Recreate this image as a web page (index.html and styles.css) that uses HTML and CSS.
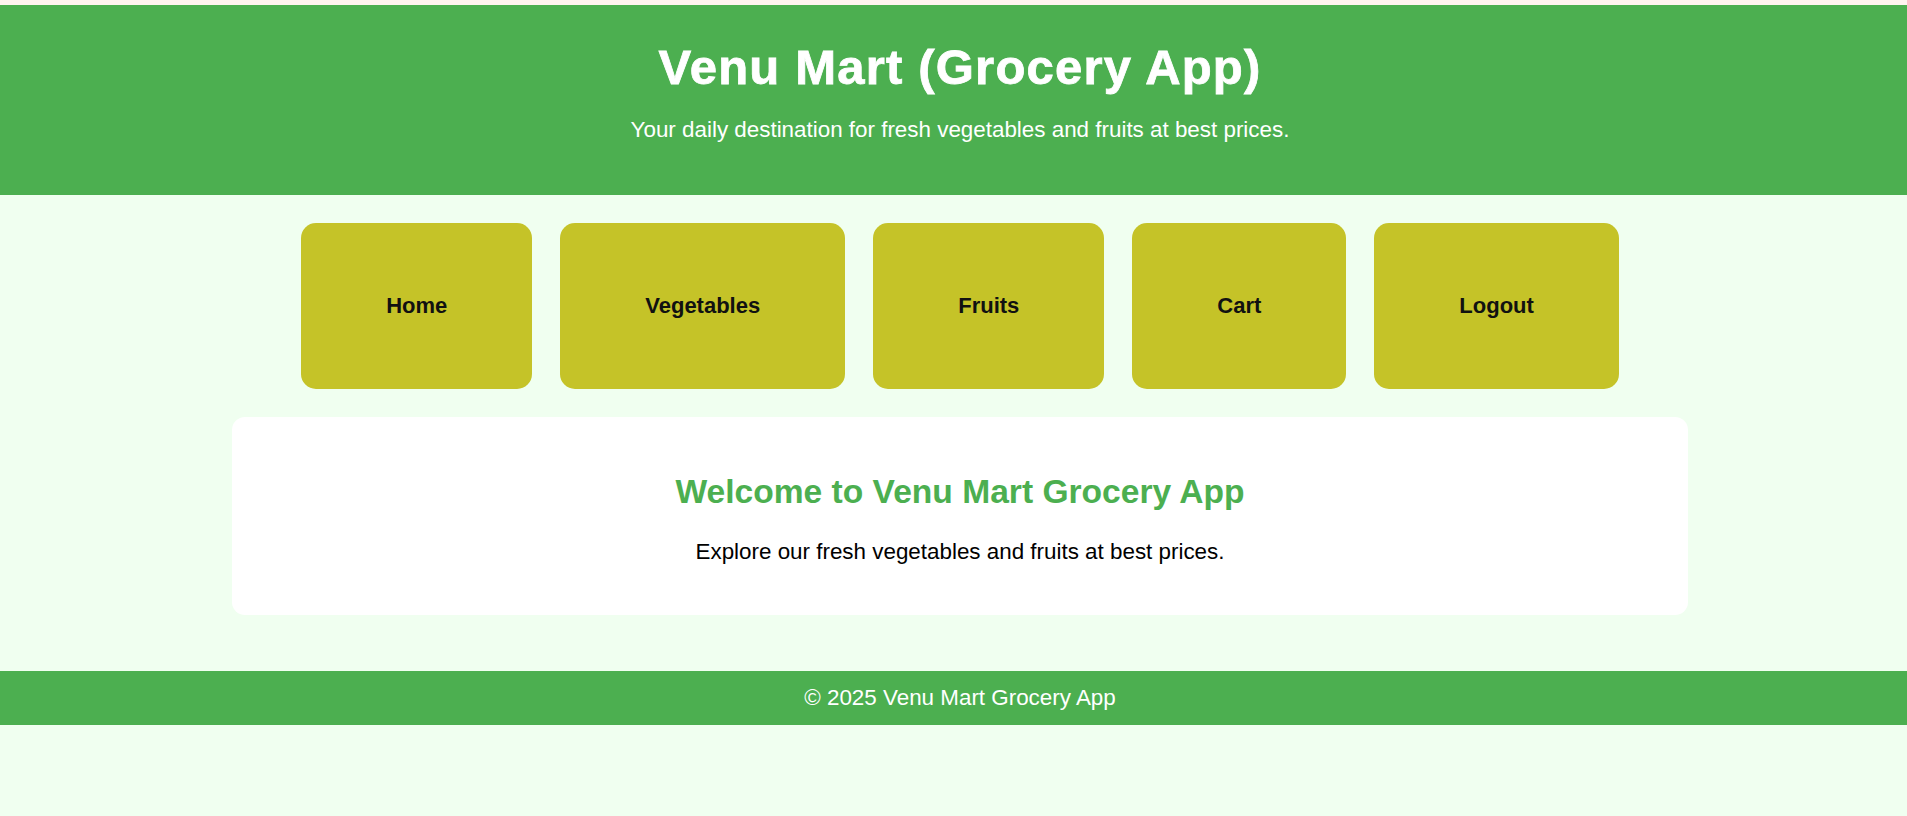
FILE: index.html
```html
<!DOCTYPE html>
<html lang="en">
<head>
<meta charset="utf-8">
<title>Venu Mart (Grocery App)</title>
<link rel="stylesheet" href="styles.css">
</head>
<body>
<div class="topline"></div>
<header class="site-header">
  <h1 class="site-title">Venu Mart (Grocery App)</h1>
  <p class="site-tagline">Your daily destination for fresh vegetables and fruits at best prices.</p>
</header>
<main class="main">
  <nav class="nav">
    <a class="nav-btn" href="#">Home</a>
    <a class="nav-btn" href="#">Vegetables</a>
    <a class="nav-btn" href="#">Fruits</a>
    <a class="nav-btn" href="#">Cart</a>
    <a class="nav-btn" href="#">Logout</a>
  </nav>
  <section class="card">
    <h2 class="card-title">Welcome to Venu Mart Grocery App</h2>
    <p class="card-text">Explore our fresh vegetables and fruits at best prices.</p>
  </section>
</main>
<footer class="site-footer">&copy; 2025 Venu Mart Grocery App</footer>
</body>
</html>
```
FILE: styles.css
```css
html, body {
  margin: 0;
  padding: 0;
}
body {
  background: #f0fff0;
  font-family: "Liberation Sans", Arial, sans-serif;
  color: #000;
  min-height: 816px;
}
.topline {
  height: 5px;
  background: #fff4ef;
}
.site-header {
  background: #4caf50;
  color: #fff;
  text-align: center;
  padding: 35px 0 52px 13px;
}
.site-title {
  margin: 0;
  font-size: 49px;
  line-height: 55px;
  font-weight: 700;
  letter-spacing: 1.2px;
  -webkit-text-stroke: 0.8px #fff;
}
.site-tagline {
  margin: 22px 0 0;
  font-size: 22.4px;
  line-height: 26px;
}
.main {
  padding: 28px 0 56px 13px;
  display: flex;
  flex-direction: column;
  align-items: center;
  gap: 28px;
}
.nav {
  display: flex;
  justify-content: center;
  gap: 28px;
}
.nav-btn {
  display: block;
  background: #c5c328;
  color: #111;
  text-decoration: none;
  font-weight: 700;
  font-size: 22px;
  line-height: 26px;
  padding: 70px 85px;
  border-radius: 15px;
}
.card {
  width: 1456px;
  box-sizing: border-box;
  background: #fff;
  border-radius: 13px;
  text-align: center;
  padding: 55px 20px 51px;
}
.card-title {
  margin: 0 0 28px;
  color: #4caf50;
  font-size: 33.6px;
  line-height: 39px;
  font-weight: 700;
}
.card-text {
  margin: 0;
  font-size: 22.4px;
  line-height: 25px;
}
.site-footer {
  background: #4caf50;
  color: #fff;
  text-align: center;
  font-size: 22.4px;
  line-height: 54px;
  height: 54px;
  padding-left: 13px;
}
```
